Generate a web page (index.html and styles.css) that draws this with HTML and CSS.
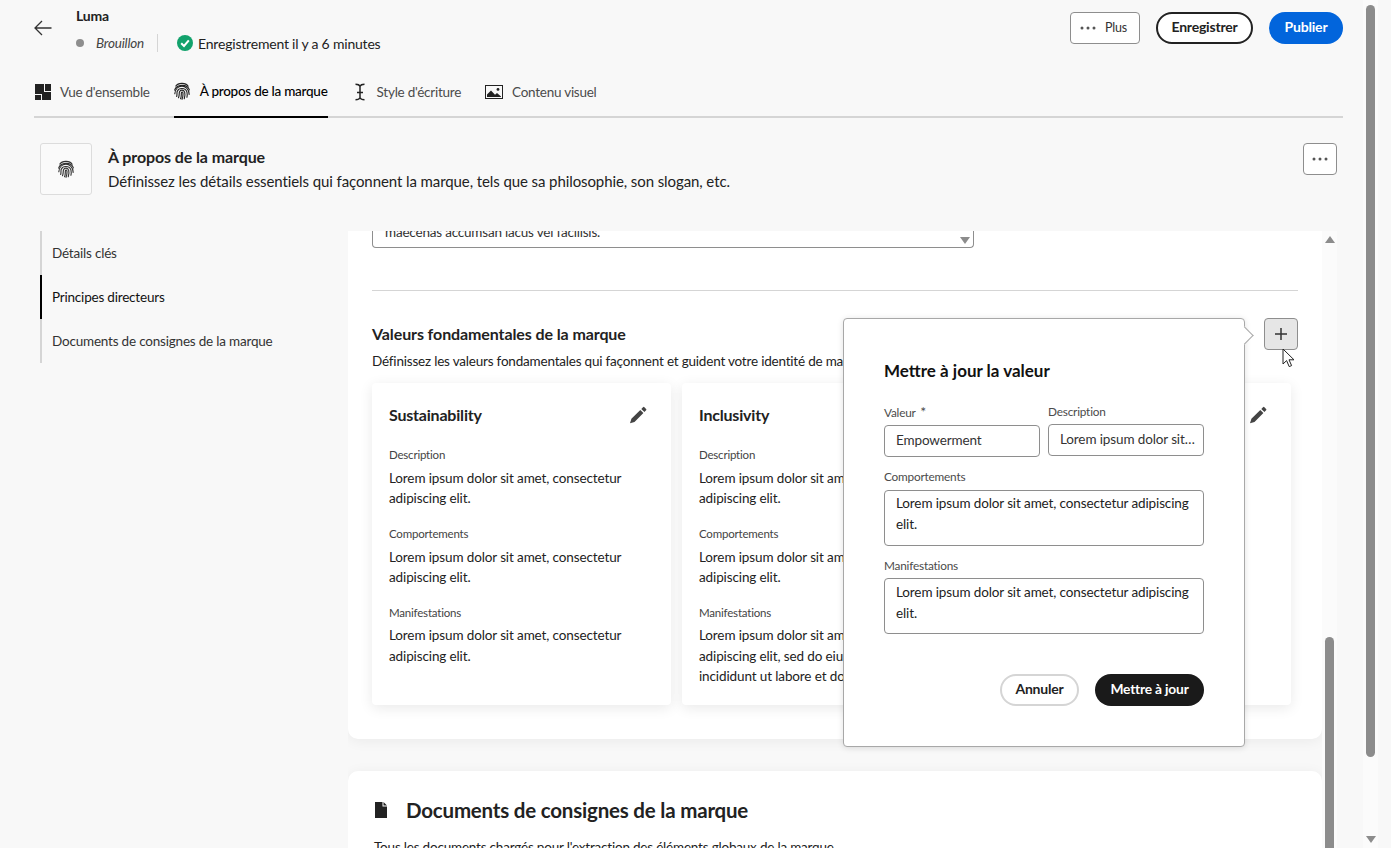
FILE: index.html
```html
<!DOCTYPE html>
<html lang="fr">

<head>
    <meta charset="UTF-8">
    <meta name="viewport" content="width=device-width, initial-scale=1.0">
    <title>Luma - À propos de la marque</title>
    <link rel="stylesheet" href="styles.css">
</head>

<body>
    <svg class="defs" width="0" height="0">
        <symbol id="fingerprint" viewBox="1.2 0.8 15.6 17">
            <g fill="none" stroke="currentColor" stroke-width="1.1" stroke-linecap="round">
                <path d="M3 4.5C5 1.2 12.5 0.6 15 4.6" />
                <path d="M1.8 8.4C3.6 2.6 14 2 16.2 8.2" />
                <path d="M2 12C2.4 6.6 6 4.6 9 4.6S15.8 7 16 12.6" />
                <path d="M3.8 14.6C4.4 13 3.8 11 4.4 9.6 5.6 6 12.4 5.6 13.8 10.2 14.2 12 14.2 13.6 13.8 15.4" />
                <path d="M5.6 15.8C6.6 13.8 6 11.6 6.6 10 7.6 7.8 10.8 8 11.6 10.4 12.2 12.6 12 14.6 11.2 16.8" />
                <path d="M7.6 16.8C8.6 14.6 8.2 12.2 8.4 11 8.8 9.8 9.8 10.2 9.9 11.4 10.1 13.4 9.8 15.4 9 17.4" />
            </g>
        </symbol>
        <symbol id="pencil" viewBox="0 0 18 18">
            <path fill="currentColor" d="M14 1.2a1 1 0 0 1 1.4 0l1.7 1.7a1 1 0 0 1 0 1.4l-1.7 1.7-3.1-3.1zM11.3 3.9l3.1 3.1-8.9 8.9-4.5 1.4 1.4-4.5z" />
        </symbol>
        <symbol id="dots" viewBox="0 0 16 4">
            <circle cx="2" cy="2" r="1.5" fill="currentColor" />
            <circle cx="8" cy="2" r="1.5" fill="currentColor" />
            <circle cx="14" cy="2" r="1.5" fill="currentColor" />
        </symbol>
    </svg>

    <div class="page">
        <header class="topbar">
            <svg class="back" width="18" height="16" viewBox="0 0 18 16">
                <path d="M17.5 8H1M8 1 1 8l7 7" fill="none" stroke="currentColor" stroke-width="1.3" />
            </svg>
            <div class="brand">
                <div class="brand-name">Luma</div>
                <div class="brand-status">
                    <span class="dot"></span>
                    <em class="draft">Brouillon</em>
                    <span class="sep"></span>
                    <svg class="check" width="16" height="16" viewBox="0 0 16 16">
                        <circle cx="8" cy="8" r="8" fill="#12a26c" />
                        <path d="M4.2 8.2 7 11l4.8-5.6" fill="none" stroke="#fff" stroke-width="2" />
                    </svg>
                    <span>Enregistrement il y a 6 minutes</span>
                </div>
            </div>
            <div class="actions">
                <button class="btn-more"><svg width="16" height="4"><use href="#dots" /></svg>Plus</button>
                <button class="btn-save">Enregistrer</button>
                <button class="btn-publish">Publier</button>
            </div>
        </header>

        <nav class="tabs">
            <a class="tab">
                <svg width="16" height="16" viewBox="0 0 16 16">
                    <path fill="currentColor" d="M0 0h9v10H0zM10 0h6v7h-6zM0 11h6v5H0zM7 11V8h9v8H7z" />
                </svg>
                Vue d'ensemble
            </a>
            <a class="tab active">
                <svg width="16" height="18"><use href="#fingerprint" /></svg>
                À propos de la marque
            </a>
            <a class="tab">
                <svg width="16" height="18" viewBox="0 0 16 18">
                    <path d="M3.5 1.2C6 1.2 7.4 1.8 8 3.2 8.6 1.8 10 1.2 12.5 1.2M8 3v12M3.5 16.8C6 16.8 7.4 16.2 8 14.8 8.6 16.2 10 16.8 12.5 16.8M5 9.4h6" fill="none" stroke="currentColor" stroke-width="1.5" />
                </svg>
                Style d'écriture
            </a>
            <a class="tab">
                <svg width="18" height="14" viewBox="0 0 18 14">
                    <path fill="currentColor" d="M0 0h18v14H0zm1 1v12h16V1z" />
                    <path fill="currentColor" d="M2 12V9.6l4-4 4 4.2 2-1.8 4 3.4V12z" />
                    <circle cx="13" cy="4.4" r="1.4" fill="currentColor" />
                </svg>
                Contenu visuel
            </a>
        </nav>

        <section class="intro">
            <div class="intro-icon"><svg width="16" height="18"><use href="#fingerprint" /></svg></div>
            <div class="intro-text">
                <h1>À propos de la marque</h1>
                <p>Définissez les détails essentiels qui façonnent la marque, tels que sa philosophie, son slogan, etc.</p>
            </div>
            <button class="btn-dots"><svg width="16" height="4"><use href="#dots" /></svg></button>
        </section>

        <div class="workspace">
            <ul class="sidenav">
                <li>Détails clés</li>
                <li class="active">Principes directeurs</li>
                <li>Documents de consignes de la marque</li>
            </ul>

            <div class="panel">
                <div class="panel-content">
                    <section class="sheet sheet-values">
                        <div class="clipped-field">
                            <p>maecenas accumsan lacus vel facilisis.</p>
                            <span class="resize-handle"></span>
                        </div>
                        <hr class="divider">
                        <div class="values-head">
                            <div>
                                <h2>Valeurs fondamentales de la marque</h2>
                                <p>Définissez les valeurs fondamentales qui façonnent et guident votre identité de marque.</p>
                            </div>
                            <button class="btn-add">
                                <svg width="14" height="14" viewBox="0 0 14 14">
                                    <path d="M7 1v12M1 7h12" fill="none" stroke="currentColor" stroke-width="1.5" />
                                </svg>
                            </button>
                        </div>
                        <div class="value-cards">
                            <article class="value-card">
                                <header>
                                    <h3>Sustainability</h3>
                                    <svg width="18" height="18"><use href="#pencil" /></svg>
                                </header>
                                <h4>Description</h4>
                                <p>Lorem ipsum dolor sit amet, consectetur adipiscing elit.</p>
                                <h4>Comportements</h4>
                                <p>Lorem ipsum dolor sit amet, consectetur adipiscing elit.</p>
                                <h4>Manifestations</h4>
                                <p class="last">Lorem ipsum dolor sit amet, consectetur adipiscing elit.</p>
                            </article>
                            <article class="value-card">
                                <header>
                                    <h3>Inclusivity</h3>
                                    <svg width="18" height="18"><use href="#pencil" /></svg>
                                </header>
                                <h4>Description</h4>
                                <p>Lorem ipsum dolor sit amet, consectetur adipiscing elit.</p>
                                <h4>Comportements</h4>
                                <p>Lorem ipsum dolor sit amet, consectetur adipiscing elit.</p>
                                <h4>Manifestations</h4>
                                <p class="last">Lorem ipsum dolor sit amet, consectetur adipiscing elit, sed do eiusmod tempor incididunt ut labore et dolore.</p>
                            </article>
                            <article class="value-card">
                                <header class="pencil-only">
                                    <svg width="18" height="18"><use href="#pencil" /></svg>
                                </header>
                            </article>
                        </div>
                    </section>

                    <section class="sheet sheet-docs">
                        <div class="docs-title">
                            <svg width="12" height="16" viewBox="0 0 12 16">
                                <path fill="currentColor" d="M0 0h7.5v4.5H12V16H0zM8.5 0 12 3.5H8.5z" />
                            </svg>
                            <h2>Documents de consignes de la marque</h2>
                        </div>
                        <p>Tous les documents chargés pour l'extraction des éléments globaux de la marque.</p>
                    </section>
                </div>
                <div class="panel-scroll">
                    <span class="arrow-up"></span>
                    <span class="panel-thumb"></span>
                </div>
            </div>
        </div>

        <div class="popover">
            <h2>Mettre à jour la valeur</h2>
            <div class="form-row">
                <div class="field">
                    <label>Valeur <span class="req">*</span></label>
                    <input type="text" value="Empowerment">
                </div>
                <div class="field">
                    <label>Description</label>
                    <input type="text" value="Lorem ipsum dolor sit amet, consectetur">
                </div>
            </div>
            <div class="field">
                <label>Comportements</label>
                <div class="area">Lorem ipsum dolor sit amet, consectetur adipiscing elit.</div>
            </div>
            <div class="field field-last">
                <label>Manifestations</label>
                <div class="area">Lorem ipsum dolor sit amet, consectetur adipiscing elit.</div>
            </div>
            <div class="popover-actions">
                <button class="btn-cancel">Annuler</button>
                <button class="btn-update">Mettre à jour</button>
            </div>
            <span class="popover-tip"></span>
        </div>

        <svg class="cursor" width="13" height="20" viewBox="0 0 13 20">
            <path d="M1 1v15l3.6-3.4 2.6 6 2.4-1-2.6-5.8h5z" fill="#fff" stroke="#222" stroke-width="1" />
        </svg>
    </div>

    <div class="page-scroll">
        <span class="page-thumb"></span>
        <span class="arrow-down"></span>
    </div>
</body>

</html>
```
FILE: styles.css
```css
* {
    box-sizing: border-box;
}

html,
body {
    height: 100%;
}

body {
    margin: 0;
    display: flex;
    height: 848px;
    overflow: hidden;
    background-color: #f8f8f8;
    color: #222;
    font-family: "Lato", "Noto Sans", sans-serif;
    font-size: 14px;
    letter-spacing: -0.2px;
}

.defs {
    position: absolute;
}

h1,
h2,
h3,
h4,
p,
ul {
    margin: 0;
    padding: 0;
}

button {
    font-family: inherit;
    letter-spacing: inherit;
    cursor: pointer;
}

.page {
    position: relative;
    width: 1363px;
    height: 848px;
    padding: 0 20px 0 34px;
    flex-shrink: 0;
}

/* top bar */
.topbar {
    display: flex;
    height: 72px;
}

.back {
    margin-top: 20px;
    color: #333;
}

.brand {
    margin-left: 24px;
    padding-top: 7px;
}

.brand-name {
    font-size: 14px;
    font-weight: 700;
    line-height: 17px;
}

.brand-status {
    display: flex;
    align-items: center;
    margin-top: 9px;
    height: 20px;
}

.dot {
    width: 8px;
    height: 8px;
    border-radius: 50%;
    background-color: #8e8e8e;
    margin-right: 12px;
}

.draft {
    font-size: 13.5px;
    color: #444;
}

.sep {
    width: 1px;
    height: 18px;
    background-color: #d5d5d5;
    margin: 0 19px 0 13px;
}

.check {
    margin-right: 5px;
}

.actions {
    display: flex;
    gap: 16px;
    margin-left: auto;
    padding-top: 12px;
}

.actions button {
    height: 32px;
    padding-bottom: 5px;
    font-size: 14px;
}

.actions .btn-more {
    display: flex;
    align-items: center;
    gap: 9px;
    width: 70px;
    padding: 0 0 1px 9px;
    background-color: #fff;
    border: 1px solid #8e8e8e;
    border-radius: 4px;
    color: #333;
    font-size: 12.5px;
}

.btn-more svg,
.btn-dots svg {
    color: #555;
}

.btn-more svg {
    margin-top: 1px;
}

.btn-save {
    width: 97px;
    background-color: #fff;
    border: 2px solid #222;
    border-radius: 16px;
    color: #222;
    font-weight: 700;
}

.btn-publish {
    width: 74px;
    background-color: #0265dc;
    border: 0;
    border-radius: 16px;
    color: #fff;
    font-weight: 700;
}

/* tabs */
.tabs {
    display: flex;
    gap: 24px;
    height: 46px;
    border-bottom: 2px solid #d5d5d5;
}

.tab {
    display: flex;
    align-items: center;
    gap: 9px;
    height: 46px;
    padding-bottom: 6px;
    color: #4b4b4b;
    font-size: 13.5px;
    letter-spacing: -0.25px;
}

.tab:first-child {
    padding-left: 1px;
}

.tab svg {
    color: #222;
    margin-top: -1px;
}

.tab.active {
    gap: 10px;
    color: #000;
    font-weight: 500;
    border-bottom: 2px solid #000;
}

/* section intro */
.intro {
    display: flex;
    margin: 25px 6px 0;
    height: 52px;
}

.intro-icon {
    display: flex;
    align-items: center;
    justify-content: center;
    width: 52px;
    height: 52px;
    background-color: #fafafa;
    border: 1px solid #dcdcdc;
    border-radius: 3px;
    color: #333;
}

.intro-text {
    margin-left: 16px;
}

.intro-text h1 {
    font-size: 16px;
    font-weight: 700;
    letter-spacing: -0.1px;
    line-height: 20px;
    margin-top: 4px;
}

.intro-text p {
    font-size: 15px;
    letter-spacing: -0.09px;
    line-height: 20px;
    margin-top: 4px;
}

.btn-dots {
    display: flex;
    align-items: center;
    justify-content: center;
    width: 34px;
    height: 32px;
    margin-left: auto;
    padding: 0;
    background-color: #fff;
    border: 1px solid #8e8e8e;
    border-radius: 4px;
}

/* body area */
.workspace {
    display: flex;
    margin: 36px 6px 0;
}

.sidenav {
    width: 308px;
    height: 132px;
    flex-shrink: 0;
    list-style: none;
}

.sidenav li {
    display: flex;
    align-items: center;
    height: 44px;
    padding: 0 0 1px 10px;
    border-left: 2px solid #d5d5d5;
    color: #333;
    font-size: 13.5px;
}

.sidenav li.active {
    border-left-color: #000;
    color: #111;
}

.panel {
    display: flex;
    width: 989px;
    height: 617px;
    overflow: hidden;
    flex-shrink: 0;
}

.panel-content {
    width: 974px;
    flex-shrink: 0;
}

.panel-scroll {
    display: flex;
    flex-direction: column;
    align-items: center;
    justify-content: space-between;
    width: 15px;
    background-color: #fbfbfb;
    padding-top: 5px;
}

.arrow-up,
.arrow-down {
    width: 0;
    height: 0;
    border-left: 5px solid transparent;
    border-right: 5px solid transparent;
}

.arrow-up {
    border-bottom: 7px solid #8c8c8c;
}

.arrow-down {
    border-top: 7px solid #8c8c8c;
}

.panel-thumb {
    width: 9px;
    height: 211px;
    background-color: #8c8c8c;
    border-radius: 5px 5px 0 0;
}

.sheet {
    background-color: #fff;
    border-radius: 0 0 10px 10px;
    box-shadow: 0 2px 14px rgba(0, 0, 0, 0.06);
}

.sheet-values {
    height: 508px;
    padding: 0 24px;
}

.clipped-field {
    position: relative;
    width: 602px;
    height: 17px;
    padding: 0 12px;
    border: 1px solid #8e8e8e;
    border-top: 0;
    border-radius: 0 0 4px 4px;
    overflow: hidden;
}

.clipped-field p {
    margin-top: -8px;
    font-size: 13.5px;
    line-height: 18px;
    color: #333;
}

.resize-handle {
    position: absolute;
    right: 3px;
    bottom: 3px;
    width: 0;
    height: 0;
    border-left: 5px solid transparent;
    border-right: 5px solid transparent;
    border-top: 7px solid #8c8c8c;
}

.divider {
    margin: 42px 0 0;
    border: 0;
    border-top: 1px solid #d5d5d5;
}

.values-head {
    display: flex;
    justify-content: space-between;
    margin-top: 27px;
    height: 65px;
}

.values-head h2 {
    font-size: 16px;
    font-weight: 700;
    letter-spacing: -0.1px;
    line-height: 20px;
    margin-top: 6px;
}

.values-head p {
    font-size: 13.5px;
    line-height: 18px;
    margin-top: 8px;
    white-space: nowrap;
}

.btn-add {
    display: flex;
    align-items: center;
    justify-content: center;
    width: 34px;
    height: 32px;
    padding: 0;
    background-color: #e6e6e6;
    border: 1px solid #8e8e8e;
    border-radius: 4px;
    color: #333;
}

.value-cards {
    display: grid;
    grid-template-columns: repeat(3, 299px);
    gap: 11px;
}

.value-card {
    height: 322px;
    padding: 16px 17px;
    background-color: #fff;
    border-radius: 4px;
    box-shadow: 0 3px 14px rgba(0, 0, 0, 0.09);
}

.value-card header {
    display: flex;
    align-items: center;
    justify-content: space-between;
    height: 32px;
    margin-bottom: 16px;
}

.value-card .pencil-only {
    justify-content: flex-end;
}

.value-card header svg {
    color: #444;
    margin-right: 7px;
}

.value-card h3 {
    font-size: 16px;
    font-weight: 700;
    margin-bottom: 2px;
}

.value-card h4 {
    margin-top: 18px;
    font-size: 11.5px;
    font-weight: 400;
    line-height: 16px;
    color: #444;
}

.value-card header + h4 {
    margin-top: 0;
}

.value-card p {
    margin-top: 5px;
    font-size: 13.5px;
    letter-spacing: -0.12px;
    line-height: 20px;
    color: #222;
}

.value-card p.last {
    margin-top: 4px;
    line-height: 20.5px;
}

.sheet-docs {
    margin-top: 32px;
    height: 110px;
    padding: 25px 26px 0;
    border-radius: 10px 10px 0 0;
}

.docs-title {
    display: flex;
    align-items: center;
    gap: 19px;
    padding-left: 1px;
}

.docs-title h2 {
    font-size: 20.5px;
    font-weight: 700;
    line-height: 28px;
}

.sheet-docs p {
    margin-top: 14px;
    font-size: 13.5px;
    line-height: 18px;
}

/* popover */
.popover {
    position: absolute;
    left: 843px;
    top: 318px;
    width: 402px;
    height: 429px;
    padding: 40px 40px 0;
    background-color: #fff;
    border: 1px solid #a8a8a8;
    border-radius: 4px;
    box-shadow: 0 1px 6px rgba(0, 0, 0, 0.12);
}

.popover h2 {
    font-size: 17px;
    font-weight: 700;
    letter-spacing: 0;
    line-height: 24px;
    color: #111;
    margin-bottom: 21px;
}

.popover-tip {
    position: absolute;
    right: -7px;
    top: 10px;
    width: 13px;
    height: 13px;
    background-color: #fff;
    border-top: 1px solid #a8a8a8;
    border-right: 1px solid #a8a8a8;
    transform: rotate(45deg);
}

.form-row {
    display: grid;
    grid-template-columns: 156px 156px;
    gap: 8px;
}

.field {
    margin-bottom: 12px;
}

.field label {
    display: block;
    font-size: 11.8px;
    line-height: 16px;
    color: #4b4b4b;
    margin-bottom: 5px;
}

.form-row .field label,
.field-last label {
    margin-bottom: 4px;
}

.req {
    font-size: 14px;
    margin-left: 2px;
}

.field input {
    display: block;
    width: 100%;
    height: 32px;
    padding: 0 7px 2px 11px;
    background-color: #fff;
    border: 1px solid #8e8e8e;
    border-radius: 4px;
    color: #333;
    font-family: inherit;
    font-size: 13.5px;
    letter-spacing: -0.12px;
    text-overflow: ellipsis;
}

.area {
    height: 56px;
    padding: 2px 11px;
    border: 1px solid #8e8e8e;
    border-radius: 4px;
    font-size: 13.5px;
    letter-spacing: -0.12px;
    line-height: 21px;
    color: #222;
}

.field-last .area {
    padding-top: 3px;
}

.popover-actions {
    display: flex;
    justify-content: flex-end;
    gap: 16px;
    margin-top: 40px;
}

.popover-actions button {
    height: 32px;
    padding-bottom: 5px;
    border-radius: 16px;
    font-size: 14px;
    font-weight: 700;
}

.btn-cancel {
    width: 79px;
    background-color: #fff;
    border: 2px solid #d5d5d5;
    color: #222;
}

.popover-actions .btn-update {
    width: 109px;
    background-color: #1a1a1a;
    border: 0;
    color: #fff;
    font-size: 13.8px;
}

.cursor {
    position: absolute;
    left: 1282px;
    top: 348px;
}

/* window scrollbar */
.page-scroll {
    display: flex;
    flex-direction: column;
    align-items: center;
    justify-content: space-between;
    width: 15px;
    height: 848px;
    padding: 5px 0;
    background-color: #fbfbfb;
}

.page-thumb {
    width: 9px;
    height: 752px;
    background-color: #8c8c8c;
    border-radius: 5px;
}
```
